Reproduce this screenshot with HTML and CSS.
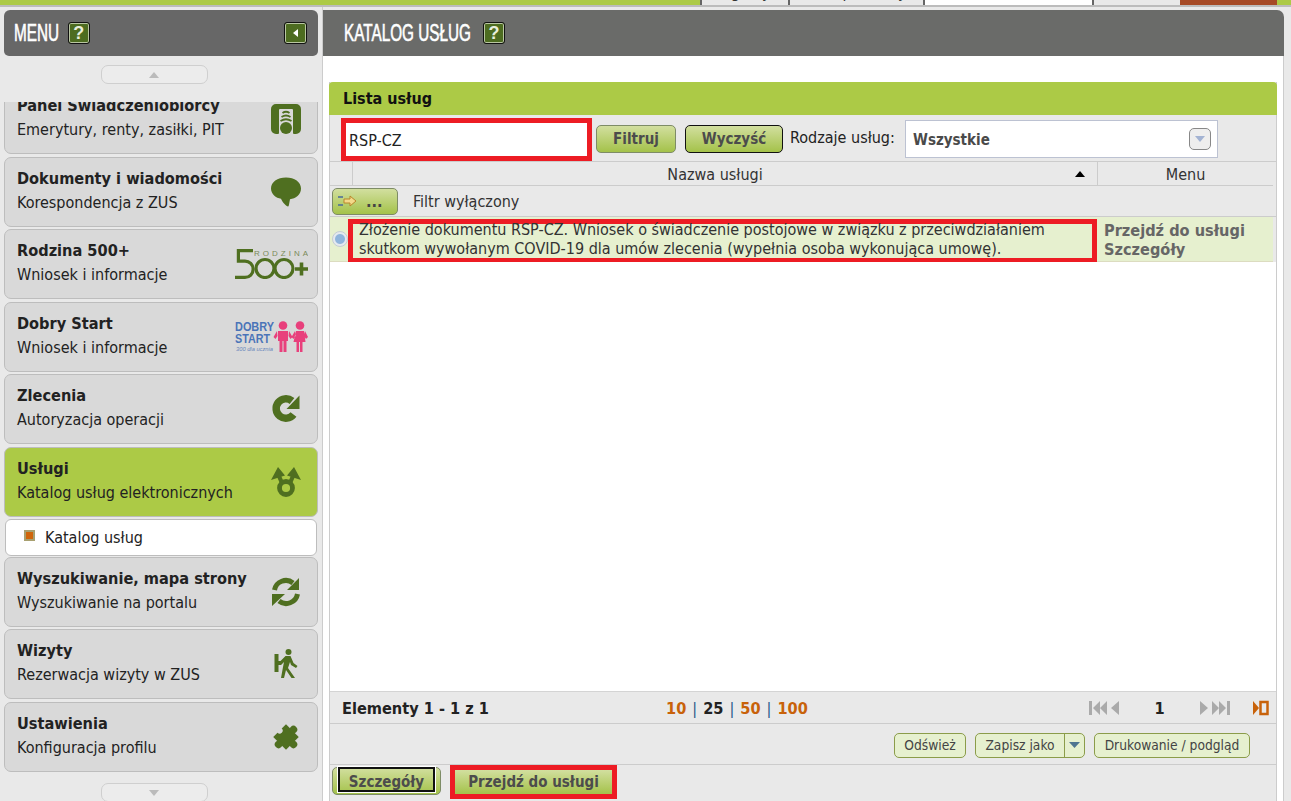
FILE: index.html
```html
<!DOCTYPE html>
<html lang="pl">
<head><meta charset="utf-8"><title>Katalog usług</title><link rel="stylesheet" href="styles.css"></head>
<body>
<div class="top"><div class="topfill"></div><div class="tab t1"><span>Ogólny</span></div><div class="tab t2"><span>Ubezpieczony</span></div><div class="tab t3"></div><div class="tab t4"></div><div class="logout"></div><div class="topfill end"></div></div>
<div class="layout">
<aside class="side">
 <div class="head"><span class="htitle tmenu">MENU</span><span class="hbtn">?</span><span class="hspace"></span><span class="hbtn sq"><svg width="12" height="12" viewBox="0 0 12 12"><path d="M8 2v8L3 6z" fill="#fff"/></svg></span></div>
 <div class="scroll-up"><span class="pill"><svg width="12" height="8" viewBox="0 0 12 8"><path d="M6 1l5 6H1z" fill="#bbb"/></svg></span></div>
 <div class="viewport">
  <div class="items">
   <div class="item"><div class="txt"><b>Panel Świadczeniobiorcy</b><span>Emerytury, renty, zasiłki, PIT</span></div>
    <svg class="ic" width="30" height="30" viewBox="0 0 30 30"><path fill="#4f6f20" d="M5 0h20a5 5 0 0 1 5 5v20a5 5 0 0 1-5 5h-2a1 1 0 0 1-1-1V6a1 1 0 0 0-1-1H9a1 1 0 0 0-1 1v23a1 1 0 0 1-1 1H5a5 5 0 0 1-5-5V5a5 5 0 0 1 5-5z"/><circle cx="15" cy="24" r="6" fill="#4f6f20"/><g fill="none" stroke="#4f6f20" stroke-width="1.800"><path d="M11.500 9q3.500-2.500 7 0"/><path d="M10.500 13q4.500-3 9 0"/><path d="M9.500 17q5.500-3.500 11 0"/></g></svg></div>
   <div class="item"><div class="txt"><b>Dokumenty i wiadomości</b><span>Korespondencja z ZUS</span></div>
    <svg class="ic" width="30" height="30" viewBox="0 0 30 30"><path fill="#4f6f20" d="M15 0.500c8.500 0 15 4.500 15 11s-5.500 10-11 10.800c-.6 3-1 6-1.500 7-1.500.8-5.500-3-7.500-7.500C5 21 0 17 0 11.500 0 5 6.500.5 15 .5z"/></svg></div>
   <div class="item"><div class="txt"><b>Rodzina 500+</b><span>Wniosek i informacje</span></div>
    <svg class="ic wide" width="73" height="30" viewBox="0 0 73 30"><text x="19" y="7" class="rodz" textLength="54" lengthAdjust="spacing">RODZINA</text><path fill="none" stroke="#4f6f20" stroke-width="3.200" d="M18 1.600H3.400v10.500H10a8.100 8.100 0 0 1 0 16.300H0"/><circle cx="30" cy="19.500" r="9" fill="none" stroke="#4f6f20" stroke-width="3.200"/><circle cx="49" cy="19.500" r="9" fill="none" stroke="#4f6f20" stroke-width="3.200"/><path stroke="#4f6f20" stroke-width="3.600" d="M60 20h13M66.500 13.500v13"/></svg></div>
   <div class="item"><div class="txt"><b>Dobry Start</b><span>Wniosek i informacje</span></div>
    <svg class="ic wide" width="73" height="31" viewBox="0 0 73 31"><text x="0" y="10" class="ds" textLength="39" lengthAdjust="spacingAndGlyphs">DOBRY</text><text x="0" y="22" class="ds" textLength="35" lengthAdjust="spacingAndGlyphs">START</text><text x="1" y="30" class="ds2" textLength="37" lengthAdjust="spacingAndGlyphs">300 dla ucznia</text><g fill="#e8407c"><circle cx="48" cy="4.500" r="4.300"/><path d="M43 10h10v10h-1.500v11h-3v-11h-1v11h-3v-11H43zM42 10l-3.500 6 2 2 2-3zM54 10l3.500 6-2 2-2-3z"/><circle cx="65" cy="4.500" r="4.300"/><path d="M61 10h8l1.500 11h-3v10h-2.500v-10h-1v10h-2.500v-10h-3zM60 10l-3.500 6 2 2 2-3zM70 10l3 6-2 2-2-3z"/></g></svg></div>
   <div class="item"><div class="txt"><b>Zlecenia</b><span>Autoryzacja operacji</span></div>
    <svg class="ic" width="30" height="30" viewBox="0 0 30 30"><path fill="none" stroke="#4f6f20" stroke-width="7.500" d="M22.500 20.500A9.700 9.700 0 1 1 21 7"/><path fill="#4f6f20" d="M28.500 1.500V15h-13z"/></svg></div>
   <div class="item active"><div class="txt"><b>Usługi</b><span>Katalog usług elektronicznych</span></div>
    <svg class="ic" width="30" height="30" viewBox="0 0 30 30"><path fill="#4f6f20" d="M7 0l7 8.500L0 13zM23 0L30 13 16 8.500z"/><path stroke="#4f6f20" stroke-width="4.200" d="M7.500 8l3.500 8M22.500 8L19 16"/><circle cx="15" cy="21" r="6.500" fill="none" stroke="#4f6f20" stroke-width="4.800"/></svg></div>
   <div class="sub"><i class="bullet"></i>Katalog usług</div>
   <div class="item"><div class="txt"><b>Wyszukiwanie, mapa strony</b><span>Wyszukiwanie na portalu</span></div>
    <svg class="ic" width="30" height="30" viewBox="0 0 30 30"><g fill="none" stroke="#4f6f20" stroke-width="5"><path d="M3.500 13A11.500 11.500 0 0 1 22 6"/><path d="M26.500 17A11.500 11.500 0 0 1 8 24"/></g><path fill="#4f6f20" d="M28 1v12H16zM1 29V17h13z"/></svg></div>
   <div class="item"><div class="txt"><b>Wizyty</b><span>Rezerwacja wizyty w ZUS</span></div>
    <svg class="ic" width="30" height="30" viewBox="0 0 30 30"><g fill="#4f6f20" transform="translate(1.500 0)"><circle cx="16" cy="3" r="3"/><path d="M2 5h4v7h2l5-5h5l3 7 4 3-1.500 2-5-3-1-3-2 6 7 10h-3.500l-5.500-8-2 8h-3l2-11 1-5-3 3H6v7H2z"/></g></svg></div>
   <div class="item"><div class="txt"><b>Ustawienia</b><span>Konfiguracja profilu</span></div>
    <svg class="ic" width="30" height="30" viewBox="0 0 30 30"><g transform="rotate(45 15 15)" fill="#4f6f20"><rect x="6" y="6" width="18" height="18"/><circle cx="15" cy="4.500" r="3.800"/><circle cx="25.500" cy="15" r="3.800"/><circle cx="15" cy="25.500" r="3.800"/><circle cx="6" cy="15" r="3" fill="#d9d9d9"/></g></svg></div>
  </div>
 </div>
 <div class="scroll-down"><span class="pill"><svg width="12" height="8" viewBox="0 0 12 8"><path d="M6 7L1 1h10z" fill="#bbb"/></svg></span></div>
</aside>
<main class="main">
 <div class="mhead"><span class="htitle tkat">KATALOG USŁUG</span><span class="hbtn">?</span></div>
 <div class="mbody">
  <section class="panel">
   <h2 class="ptitle">Lista usług</h2>
   <div class="filters">
    <div class="search red">RSP-CZ</div>
    <span class="btn f1">Filtruj</span>
    <span class="btn f2">Wyczyść</span>
    <span class="flabel">Rodzaje usług:</span>
    <div class="select"><b>Wszystkie</b><span class="selbtn"><svg width="10" height="6" viewBox="0 0 10 6"><path d="M5 6L0 0h10z" fill="#a3b3d3"/></svg></span></div>
   </div>
   <div class="thead"><div class="c0"></div><div class="c1">Nazwa usługi<svg class="sort" width="10" height="6" viewBox="0 0 10 6"><path d="M5 0l5 6H0z" fill="#000"/></svg></div><div class="c2">Menu</div></div>
   <div class="frow"><span class="fbtn"><svg width="20" height="14" viewBox="0 0 20 14"><path d="M1 3h5M1 11h5" stroke="#4a6a9a" stroke-width="1.500"/><path d="M7 5h6V2l6 5-6 5V9H7z" fill="#f3d98a" stroke="#b8862a"/></svg><b>...</b></span><span class="ftext">Filtr wyłączony</span></div>
   <div class="row">
    <div class="radio"><i></i></div>
    <div class="rtext red"><div class="rinner">Złożenie dokumentu RSP-CZ. Wniosek o świadczenie postojowe w związku z przeciwdziałaniem skutkom wywołanym COVID-19 dla umów zlecenia (wypełnia osoba wykonująca umowę).</div></div>
    <div class="rlinks"><b>Przejdź do usługi</b><b>Szczegóły</b></div>
   </div>
   <div class="blank"></div>
   <div class="pager">
    <b class="count">Elementy 1 - 1 z 1</b>
    <div class="sizes"><b class="o">10</b><i>|</i><b>25</b><i>|</i><b class="o">50</b><i>|</i><b class="o">100</b></div>
    <div class="nav">
     <svg width="30" height="16" viewBox="0 0 30 16"><path fill="#aaa" d="M0 1h3v14H0zM11 1v14L4 8zM18 1v14L11 8zM30 1v14L22 8z"/></svg>
     <b class="pg">1</b>
     <svg width="30" height="16" viewBox="0 0 30 16"><path fill="#aaa" d="M0 1v14l8-7zM12 1v14l7-7zM19 1v14l7-7zM27 1h3v14h-3z"/></svg>
     <svg class="cols" width="16" height="16" viewBox="0 0 16 16"><path fill="#c8620a" d="M0 1l6 7-6 7z"/><rect x="7.500" y="2" width="7" height="12" fill="none" stroke="#c8620a" stroke-width="2.500"/></svg>
    </div>
   </div>
   <div class="actions">
    <span class="lbtn b1">Odśwież</span>
    <span class="lbtn split"><span class="sl">Zapisz jako</span><span class="sr"><svg width="11" height="6" viewBox="0 0 11 6"><path d="M5.500 6L0 0h11z" fill="#4f7590"/></svg></span></span>
    <span class="lbtn b3">Drukowanie / podgląd</span>
   </div>
   <div class="foot">
    <span class="btn szcz"><span>Szczegóły</span></span>
    <span class="btn go">Przejdź do usługi</span>
   </div>
  </section>
 </div>
</main>
</div>
</body>
</html>
```
FILE: styles.css
```css
*{box-sizing:border-box}
html,body{margin:0;height:801px;overflow:hidden}
body{background:#e9e9e9;font-family:"DejaVu Sans",sans-serif;font-stretch:condensed;font-size:16px;color:#222}
b{font-size:16.200px}
.top{display:flex;height:7px;border-bottom:2px solid #bcbcbc}
.topfill{width:700px;background:#acca46}
.topfill.end{width:auto;flex:1}
.tab{background:#e9e9e9;border-left:2px solid #666;overflow:hidden;text-align:center;line-height:19px}
.tab span{display:block;margin-top:-17px;color:#333}
.t1{width:88px}.t2{width:135px}.t3{width:169px;background:#fff}.t4{width:88px}
.logout{width:97px;background:#a64a26}
.layout{display:flex;height:794px;background:#e9e9e9}
.side{width:323px;padding:3px 0 0 4px;flex:none;border-right:1px solid #ccc}
.head{height:46px;width:314px;background:#676767;border-radius:6px 6px 5px 5px;display:flex;align-items:center;padding:0 11px 0 10px}
.htitle{display:inline-block;font-family:"Liberation Sans",sans-serif;font-stretch:normal;color:#fff;font-size:23px;-webkit-text-stroke:.6px #fff;transform:scaleX(.665);transform-origin:left center;white-space:nowrap}
.tmenu{margin-right:-24px}
.tkat{margin-right:-62px}
.hspace{flex:1}
.hbtn{width:22px;height:22px;margin-left:10px;background:#4d6c20;border:1px solid #111;box-shadow:inset 0 0 0 1px #b9c6a2;border-radius:3px;color:#e8eedc;font-weight:700;font-stretch:normal;font-family:"Liberation Sans",sans-serif;font-size:18px;display:flex;align-items:center;justify-content:center}
.sq{width:23px}
.scroll-up{height:46px;width:314px;display:flex;justify-content:center;padding:9px 14px 0 0}
.scroll-down{height:30px;width:314px;display:flex;justify-content:center;padding:10px 14px 0 0}
.pill{width:107px;height:19px;border:1px solid #cfcfcf;border-radius:7px;background:#ececec;display:flex;align-items:center;justify-content:center}
.viewport{height:671px;overflow:hidden;width:314px}
.items{margin-top:-18px;display:flex;flex-direction:column;gap:2.500px}
.item{height:70px;width:314px;background:#d9d9d9;border:1px solid #bdbdbd;border-radius:7px;display:flex;align-items:center;justify-content:space-between;padding:0 16px 0 12px;flex:none}
.item .ic.wide{margin-right:-7px}
.txt{display:flex;flex-direction:column;gap:5px;margin-top:-3px}
.txt b,.txt span{line-height:19px}
.active{background:#acca46}
.sub{height:37px;width:312px;margin:-.500px 0 -1.500px 1px;background:#fff;border:1px solid #bdbdbd;border-radius:6px;display:flex;align-items:center;padding-left:18px;gap:10px;flex:none}
.bullet{width:11px;height:11px;background:#d0650a;border:2px solid #a8a070;margin-top:-3px}
.rodz{font:8px "Liberation Sans",sans-serif;fill:#7a8a5a}
.ds{font:700 12.500px "Liberation Sans",sans-serif;fill:#4a74b8}
.ds2{font:italic 6px "Liberation Sans",sans-serif;fill:#6a88bc}
.main{flex:1;padding:3px 7px 0 0;min-width:0}
.mhead{height:46px;background:#6a6b69;border-radius:0 7px 0 0;display:flex;align-items:center;padding-left:21px}
.mbody{background:#fff;height:745px;padding:26px 6px 0 6px;border-right:1px solid #ccc}
.panel{background:#e9e9e9;height:719px;display:flex;flex-direction:column;border-left:1px solid #ccc;border-right:1px solid #ccc}
.ptitle{margin:0 -1px;height:33px;background:#acca46;border-radius:4px 4px 0 0;font-size:16px;line-height:33px;padding-left:14px;color:#111;flex:none}
.filters{height:47px;display:flex;align-items:center;border-bottom:1px solid #ccc;padding:2px 0 0 11px;flex:none}
.search{width:251px;height:43px;background:#fff;display:flex;align-items:center}
.red{border:5px solid #ed1c24}
.search.red{padding:3px 0 0 3px}
.btn{height:28px;background:linear-gradient(#d2df9f,#a4c24a);border:1px solid #7e8c66;border-radius:5px;font-weight:700;font-size:15px;color:#4c4c4c;display:inline-flex;align-items:center;justify-content:center;flex:none}
.f1{width:80px;margin-left:4px}
.f2{width:98px;margin-left:9px;border-color:#111}
.flabel{margin-left:7px;margin-top:-3px;white-space:nowrap;width:106px}
.select{width:313px;height:38px;margin-left:9px;background:#fff;border:1px solid #bcc2d2;display:flex;align-items:center;justify-content:space-between;padding:0 6px 0 7px;color:#4a4a4a}
.select b{font-size:15px;margin-top:2px}
.selbtn{width:22px;height:22px;border:1px solid #888;border-radius:5px;background:#eee;display:flex;align-items:center;justify-content:center}
.thead{display:flex;height:24px;border-bottom:1px solid #ccc;line-height:26px;flex:none;margin-right:3px}
.c0{width:23px;border-right:1px solid #ccc}
.c1{width:745px;text-align:center;border-right:1px solid #ccc;position:relative;color:#333;padding-right:20px}
.c2{flex:1;text-align:center;color:#333}
.sort{position:absolute;right:12px;top:9px}
.frow{height:31px;display:flex;align-items:center;border-bottom:1px solid #ccc;padding-left:2px;flex:none}
.fbtn{width:66px;height:27px;background:linear-gradient(#d2df9f,#a4c24a);border:1px solid #7e8c66;border-radius:5px;display:flex;align-items:center;gap:9px;padding-left:4px;color:#444}
.ftext{margin-left:15px;color:#333}
.row{height:45px;display:flex;background:#e6f0cf;border-bottom:1px solid #dcdcc0;flex:none;margin-right:3px}
.radio{width:18px;display:flex;align-items:center;justify-content:center;padding-left:1px}
.radio i{width:16px;height:16px;border-radius:50%;background:radial-gradient(#8fb4dc 45%,#e4e9ef 55%);border:1px solid #c4ccd4;flex:none}
.rtext{width:749px;margin-top:2px;height:44px;padding:0 0 0 6px;line-height:19px;color:#333;flex:none}
.rinner{margin-top:-4px}
.rlinks{display:flex;flex-direction:column;padding:4px 0 0 7px;line-height:19px;color:#666}
.blank{flex:1;background:#fff;min-height:0}
.pager{height:33px;display:flex;align-items:center;border-top:1px solid #d4d4d4;border-bottom:1px solid #ccc;padding:1px 0 0 12px;flex:none}
.count{width:324px}
.sizes{display:flex;gap:6px}
.sizes i{font-style:normal;color:#2a5a8a}
.o{color:#c8620a}
.nav{margin-left:auto;display:flex;align-items:center;padding-right:7px}
.pg{width:81px;text-align:center}
.cols{margin-left:23px}
.actions{height:41px;display:flex;justify-content:flex-end;align-items:center;gap:9px;padding:2px 26px 0 0;border-bottom:1px solid #ccc;flex:none}
.lbtn{height:25px;background:#e6f0cf;border:1px solid #8b9c4a;border-radius:5px;font-size:13.700px;color:#444;display:inline-flex;align-items:center;justify-content:center}
.b1{width:72px}.b3{width:156px}
.split{width:110px;justify-content:flex-start}
.sl{width:89px;text-align:center;border-right:1px solid #8b9c4a;line-height:23px}
.sr{flex:1;display:flex;justify-content:center}
.foot{height:36px;flex:none;display:flex;align-items:flex-start;padding-left:2px;gap:9px}
.szcz{width:109px;height:28px;margin-top:2px;align-items:flex-start}
.szcz span{border:2px solid #111;box-shadow:0 0 0 1px #fff;width:97px;height:25px;margin-top:-1px;display:block;text-align:center;padding-top:4px;line-height:19px}
.go{width:167px;height:34px;border:5px solid #ed1c24;border-radius:0}
```
